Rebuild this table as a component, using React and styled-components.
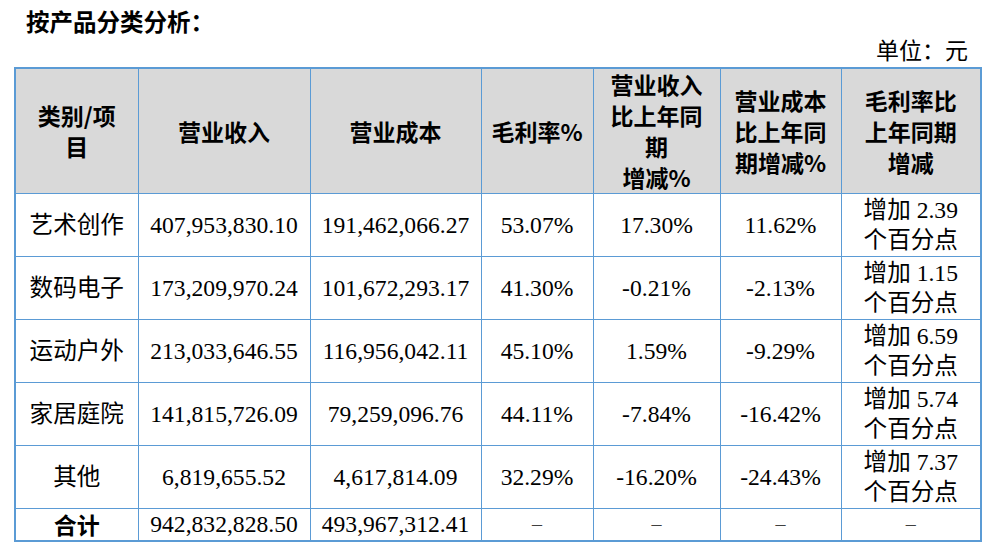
import React from "react";
import styled, { createGlobalStyle } from "styled-components";

const GlobalStyle = createGlobalStyle`
  body {
    margin: 0;
    background: #ffffff;
    color: #000000;
    font-family: "Liberation Serif", "Noto Sans CJK SC", serif;
  }
`;

const columns = [123, 172, 171, 112, 127, 121, 140];

const headers = [
  ["类别/项", "目"],
  ["营业收入"],
  ["营业成本"],
  ["毛利率%"],
  ["营业收入", "比上年同", "期", "增减%"],
  ["营业成本", "比上年同", "期增减%"],
  ["毛利率比", "上年同期", "增减"],
];

const rows = [
  ["艺术创作", "407,953,830.10", "191,462,066.27", "53.07%", "17.30%", "11.62%", "2.39"],
  ["数码电子", "173,209,970.24", "101,672,293.17", "41.30%", "-0.21%", "-2.13%", "1.15"],
  ["运动户外", "213,033,646.55", "116,956,042.11", "45.10%", "1.59%", "-9.29%", "6.59"],
  ["家居庭院", "141,815,726.09", "79,259,096.76", "44.11%", "-7.84%", "-16.42%", "5.74"],
  ["其他", "6,819,655.52", "4,617,814.09", "32.29%", "-16.20%", "-24.43%", "7.37"],
];

const App = () => {
  return (
    <Page>
      <GlobalStyle />
      <Title>按产品分类分析：</Title>
      <Unit>单位：元</Unit>
      <Table>
        <colgroup>
          {columns.map((w, i) => (
            <col key={i} style={{ width: w }} />
          ))}
        </colgroup>
        <thead>
          <HeadRow>
            {headers.map((lines, i) => (
              <HeadCell key={i}>
                {lines.map((line, j) => (
                  <Line key={j}>{line}</Line>
                ))}
              </HeadCell>
            ))}
          </HeadRow>
        </thead>
        <tbody>
          {rows.map((row) => (
            <BodyRow key={row[0]}>
              {row.slice(0, 6).map((value, i) => (
                <Cell key={i}>{value}</Cell>
              ))}
              <Cell>
                <Line>增加 {row[6]}</Line>
                <Line>个百分点</Line>
              </Cell>
            </BodyRow>
          ))}
          <TotalRow>
            <TotalLabel>合计</TotalLabel>
            <Cell>942,832,828.50</Cell>
            <Cell>493,967,312.41</Cell>
            <Dash>–</Dash>
            <Dash>–</Dash>
            <Dash>–</Dash>
            <Dash>–</Dash>
          </TotalRow>
        </tbody>
      </Table>
    </Page>
  );
};

export default App;

const Page = styled.div`
  width: 967px;
  padding-left: 14px;
`;
const Title = styled.div`
  height: 42px;
  line-height: 42px;
  padding-left: 12px;
  font-family: "Noto Sans CJK SC", sans-serif;
  font-weight: 700;
  font-size: 23.5px;
`;
const Unit = styled.div`
  height: 20px;
  line-height: 20px;
  margin-bottom: 5px;
  padding-right: 13px;
  text-align: right;
  font-size: 23px;
`;
const Table = styled.table`
  width: 967px;
  table-layout: fixed;
  border-collapse: collapse;
  border: 2px solid #5b9bd5;
`;
const HeadRow = styled.tr`
  height: 125px;
  background: #d9d9d9;
`;
const HeadCell = styled.th`
  padding: 0;
  border: 1px solid #5b9bd5;
  text-align: center;
  vertical-align: middle;
  font-family: "Noto Sans CJK SC", sans-serif;
  font-weight: 700;
  font-size: 23px;
  line-height: 31px;
`;
const Line = styled.div`
  white-space: nowrap;
`;
const BodyRow = styled.tr`
  height: 63px;
`;
const TotalRow = styled.tr`
  height: 32px;
`;
const Cell = styled.td`
  padding: 0;
  border: 1px solid #5b9bd5;
  text-align: center;
  vertical-align: middle;
  font-size: 23.6px;
  line-height: 30px;
  white-space: nowrap;
`;
const TotalLabel = styled(Cell)`
  font-family: "Noto Sans CJK SC", sans-serif;
  font-weight: 700;
  font-size: 23px;
`;
const Dash = styled(Cell)`
  color: #404040;
  font-size: 20px;
`;
